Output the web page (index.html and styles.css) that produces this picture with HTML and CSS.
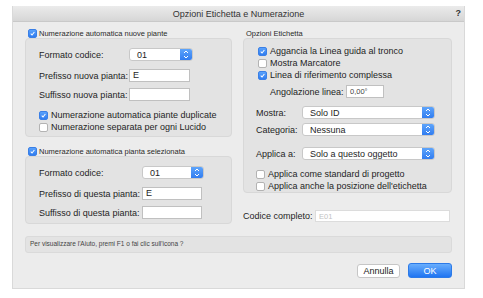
FILE: index.html
```html
<!DOCTYPE html>
<html lang="it">
<head>
  <meta charset="UTF-8">
  <title>Opzioni Etichetta e Numerazione</title>
  <link rel="stylesheet" href="styles.css">
</head>
<body>
  <div class="window">
    <div class="titlebar">
      <span class="title">Opzioni Etichetta e Numerazione</span>
      <span class="help-icon">?</span>
    </div>

    <div class="content">
      <div class="columns">
        <div class="col left">
          <div class="head">
            <span class="cb on"><svg viewBox="0 0 9 9"><path d="M2.2 4.8 L3.9 6.4 L6.9 2.6"/></svg></span>
            <span class="small">Numerazione automatica nuove piante</span>
          </div>
          <div class="box box-new">
            <div class="row r-select">
              <span class="lbl">Formato codice:</span>
              <div class="select s-code"><span>01</span><i class="step"><svg viewBox="0 0 12 13"><path d="M4 5 L6 3 L8 5 M4 8 L6 10 L8 8"/></svg></i></div>
            </div>
            <div class="row r-input">
              <span class="lbl">Prefisso nuova pianta:</span>
              <div class="input">E</div>
            </div>
            <div class="row r-input r-second">
              <span class="lbl">Suffisso nuova pianta:</span>
              <div class="input"></div>
            </div>
            <div class="checks">
              <div class="check"><span class="cb on"><svg viewBox="0 0 9 9"><path d="M2.2 4.8 L3.9 6.4 L6.9 2.6"/></svg></span>Numerazione automatica piante duplicate</div>
              <div class="check"><span class="cb"></span>Numerazione separata per ogni Lucido</div>
            </div>
          </div>

          <div class="head head-two">
            <span class="cb on"><svg viewBox="0 0 9 9"><path d="M2.2 4.8 L3.9 6.4 L6.9 2.6"/></svg></span>
            <span class="small">Numerazione automatica pianta selezionata</span>
          </div>
          <div class="box box-sel">
            <div class="row r-select">
              <span class="lbl">Formato codice:</span>
              <div class="select s-code"><span>01</span><i class="step"><svg viewBox="0 0 12 13"><path d="M4 5 L6 3 L8 5 M4 8 L6 10 L8 8"/></svg></i></div>
            </div>
            <div class="row r-input">
              <span class="lbl">Prefisso di questa pianta:</span>
              <div class="input">E</div>
            </div>
            <div class="row r-input r-second">
              <span class="lbl">Suffisso di questa pianta:</span>
              <div class="input"></div>
            </div>
          </div>
        </div>

        <div class="col right">
          <div class="head"><span class="small">Opzioni Etichetta</span></div>
          <div class="box box-label">
            <div class="check"><span class="cb on"><svg viewBox="0 0 9 9"><path d="M2.2 4.8 L3.9 6.4 L6.9 2.6"/></svg></span>Aggancia la Linea guida al tronco</div>
            <div class="check"><span class="cb"></span>Mostra Marcatore</div>
            <div class="check"><span class="cb on"><svg viewBox="0 0 9 9"><path d="M2.2 4.8 L3.9 6.4 L6.9 2.6"/></svg></span>Linea di riferimento complessa</div>
            <div class="row angle">
              <span class="lbl">Angolazione linea:</span>
              <div class="input small-input">0,00°</div>
            </div>
            <div class="row r-pop">
              <span class="lbl">Mostra:</span>
              <div class="select wide"><span>Solo ID</span><i class="step"><svg viewBox="0 0 12 13"><path d="M4 5 L6 3 L8 5 M4 8 L6 10 L8 8"/></svg></i></div>
            </div>
            <div class="row r-pop">
              <span class="lbl">Categoria:</span>
              <div class="select wide"><span>Nessuna</span><i class="step"><svg viewBox="0 0 12 13"><path d="M4 5 L6 3 L8 5 M4 8 L6 10 L8 8"/></svg></i></div>
            </div>
            <div class="row r-pop r-apply">
              <span class="lbl">Applica a:</span>
              <div class="select wide"><span>Solo a questo oggetto</span><i class="step"><svg viewBox="0 0 12 13"><path d="M4 5 L6 3 L8 5 M4 8 L6 10 L8 8"/></svg></i></div>
            </div>
            <div class="checks">
              <div class="check"><span class="cb"></span>Applica come standard di progetto</div>
              <div class="check"><span class="cb"></span>Applica anche la posizione dell'etichetta</div>
            </div>
          </div>
          <div class="row full-code">
            <span class="lbl">Codice completo:</span>
            <div class="input readonly">E01</div>
          </div>
        </div>
      </div>

      <div class="helpbar">Per visualizzare l'Aiuto, premi F1 o fai clic sull'icona ?</div>

      <div class="buttons">
        <button class="btn">Annulla</button>
        <button class="btn primary">OK</button>
      </div>
    </div>
  </div>
</body>
</html>
```

FILE: styles.css
```css
* {
  box-sizing: border-box;
}

body {
  margin: 0;
  background: #fff;
  font-family: "Liberation Sans", Arial, sans-serif;
  font-size: 9px;
  color: #1e1e1e;
}

.window {
  margin: 6px 0 0 12px;
  width: 453px;
  height: 283px;
  background: #ececec;
  border: 1px solid #d9d9d9;
  border-top: none;
}

.titlebar {
  height: 16px;
  background: linear-gradient(#ebebeb, #d6d6d6);
  border-bottom: 1px solid #c9c9c9;
  display: flex;
  align-items: center;
  justify-content: center;
  position: relative;
}

.title {
  font-size: 9px;
  color: #333;
}

.help-icon {
  position: absolute;
  right: 3px;
  top: 2px;
  font-size: 9px;
  font-weight: bold;
  color: #333;
}

.content {
  padding: 6px 12px 0 12px;
}

.columns {
  display: grid;
  grid-template-columns: 207px 209px;
  column-gap: 11px;
}

.head {
  height: 10px;
  display: flex;
  align-items: center;
  gap: 2px;
  padding-left: 3px;
}

.head-two {
  margin-top: 9px;
}

.small {
  font-size: 7.5px;
  color: #2a2a2a;
}

.box {
  background: #e3e3e3;
  border: 1px solid #d8d8d8;
  border-radius: 4px;
}

.box-new {
  height: 99px;
  padding: 9px 0 0 13px;
}

.box-sel {
  height: 68px;
  padding: 9px 0 0 13px;
}

.box-sel .lbl {
  width: 103px;
}

.row {
  display: flex;
  align-items: center;
}

.lbl {
  width: 90px;
  flex: none;
}

.r-select {
  height: 13px;
}

.r-input {
  height: 13px;
  margin-top: 8px;
}

.r-second {
  margin-top: 6px;
}

/* checkbox */
.cb {
  width: 9px;
  height: 9px;
  flex: none;
  border-radius: 2px;
  background: #fff;
  border: 1px solid #b3b3b3;
  display: inline-flex;
  margin-right: 3px;
}

.cb.on {
  background: linear-gradient(#5aa2fb, #2f7cf0);
  border-color: #3a7fe6;
}

.cb svg {
  width: 100%;
  height: 100%;
}

.cb path {
  fill: none;
  stroke: #fff;
  stroke-width: 1.3;
}

.head .cb {
  margin-right: 0;
}

.checks {
  margin-top: 8px;
}

.check {
  height: 12px;
  display: flex;
  align-items: center;
}

/* select */
.select {
  height: 13px;
  background: #fff;
  border: 1px solid #c8c8c8;
  border-radius: 3px;
  display: flex;
  align-items: center;
  overflow: hidden;
}

.select span {
  flex: 1;
  padding-left: 7px;
}

.s-code {
  width: 64px;
}

.box-sel .s-code {
  width: 62px;
}

.step {
  width: 12px;
  height: 13px;
  flex: none;
  background: linear-gradient(#62a8fc, #2d79ef);
  display: block;
}

.step svg {
  width: 12px;
  height: 13px;
  display: block;
}

.step path {
  fill: none;
  stroke: #fff;
  stroke-width: 1;
}

.input {
  width: 61px;
  height: 13px;
  background: #fff;
  border: 1px solid #c0c0c0;
  padding-left: 3px;
  line-height: 11px;
}

.box-sel .input {
  width: 60px;
}

/* right column */
.box-label {
  height: 155px;
  padding: 6px 0 0 12px;
}

.box-label > .check {
  padding-left: 2px;
}

.angle {
  height: 13px;
  margin-top: 4px;
  padding-left: 14px;
}

.angle .lbl {
  width: 76px;
}

.small-input {
  width: 38px;
  font-size: 7.5px;
  color: #444;
}

.r-pop {
  height: 13px;
  margin-top: 4px;
}

.r-pop:first-of-type {
  margin-top: 8px;
}

.angle + .r-pop {
  margin-top: 8px;
}

.r-pop .lbl {
  width: 46px;
}

.wide {
  width: 133px;
}

.r-apply {
  margin-top: 11px;
}

.full-code {
  height: 12px;
  margin-top: 17px;
}

.full-code .lbl {
  width: 72px;
}

.readonly {
  width: 135px;
  height: 12px;
  border-color: #dcdcdc;
  color: #c2c2c2;
  font-size: 7.5px;
}

.helpbar {
  margin-top: 12px;
  height: 17px;
  width: 427px;
  background: #e3e3e3;
  border: 1px solid #dadada;
  border-radius: 3px;
  font-size: 6.5px;
  color: #444;
  padding: 3px 0 0 4px;
}

.buttons {
  display: flex;
  justify-content: flex-end;
  gap: 8px;
  margin-top: 11px;
  width: 427px;
}

.btn {
  font-family: inherit;
  font-size: 9px;
  height: 14px;
  padding: 0;
  border-radius: 3px;
  border: 1px solid #c6c6c6;
  background: #fff;
  color: #222;
  width: 43px;
}

.primary {
  width: 44px;
  height: 15px;
  margin-top: -1px;
  border-color: #2c7ae8;
  background: linear-gradient(#69aefd, #1f74f1);
  color: #fff;
}
```
